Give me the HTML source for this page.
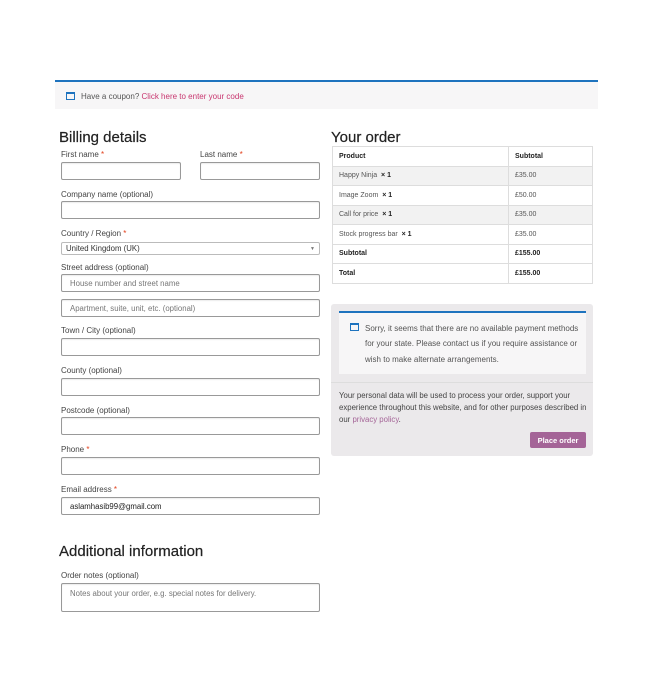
<!DOCTYPE html>
<html><head><meta charset="utf-8"><style>
*{margin:0;padding:0;box-sizing:border-box}
body{width:657px;height:696px;background:#fff;font-family:"Liberation Sans",sans-serif;color:#333;position:relative;overflow:hidden}
.a{position:absolute}
.l{position:absolute;font-size:8px;color:#444;white-space:nowrap}
.r{color:#e2401c}
.i{position:absolute;border:1px solid #999;border-radius:2px;background:#fff;box-shadow:inset 0 1px 1px rgba(0,0,0,.08);font-size:7.8px;color:#777;padding-left:8px;display:flex;align-items:center}
h2{position:absolute;font-weight:normal;font-size:15px;color:#222;white-space:nowrap;-webkit-text-stroke:0.2px #222}
table{position:absolute;left:332px;top:146px;width:261px;border-collapse:collapse;font-size:7px}
td{border:1px solid #ddd;height:19.5px;padding-left:6px;color:#555}
tr.g td{background:#f2f2f2}
td.b{font-weight:bold;color:#222}
.ic{position:absolute;width:9px;height:8px;border:1px solid #1e73be;border-top-width:2px}
</style></head><body>
<div class="a" style="left:55px;top:80px;width:543px;height:29px;background:#f7f6f7;border-top:2px solid #1e73be"></div>
<div class="ic" style="left:66px;top:92px"></div>
<div class="l" style="left:81px;top:92px;font-size:8px;color:#555">Have a coupon? <span style="color:#c8366f">Click here to enter your code</span></div>

<h2 style="left:59px;top:129px">Billing details</h2>
<div class="l" style="left:61px;top:150px">First name <span class="r">*</span></div>
<div class="i" style="left:61px;top:162px;width:120px;height:18px"></div>
<div class="l" style="left:200px;top:150px">Last name <span class="r">*</span></div>
<div class="i" style="left:200px;top:162px;width:120px;height:18px"></div>
<div class="l" style="left:61px;top:190px">Company name (optional)</div>
<div class="i" style="left:61px;top:201px;width:259px;height:18px"></div>
<div class="l" style="left:61px;top:229px">Country / Region <span class="r">*</span></div>
<div class="i" style="left:61px;top:242px;width:259px;height:13px;padding-left:4px;color:#333;box-shadow:none;border-color:#bbb">United Kingdom (UK)<span style="position:absolute;right:4px;font-size:5px;color:#777">▼</span></div>
<div class="l" style="left:61px;top:263px">Street address (optional)</div>
<div class="i" style="left:61px;top:274px;width:259px;height:18px">House number and street name</div>
<div class="i" style="left:61px;top:299px;width:259px;height:18px">Apartment, suite, unit, etc. (optional)</div>
<div class="l" style="left:61px;top:326px">Town / City (optional)</div>
<div class="i" style="left:61px;top:338px;width:259px;height:18px"></div>
<div class="l" style="left:61px;top:366px">County (optional)</div>
<div class="i" style="left:61px;top:378px;width:259px;height:18px"></div>
<div class="l" style="left:61px;top:406px">Postcode (optional)</div>
<div class="i" style="left:61px;top:417px;width:259px;height:18px"></div>
<div class="l" style="left:61px;top:445px">Phone <span class="r">*</span></div>
<div class="i" style="left:61px;top:457px;width:259px;height:18px"></div>
<div class="l" style="left:61px;top:485px">Email address <span class="r">*</span></div>
<div class="i" style="left:61px;top:497px;width:259px;height:18px;color:#222">aslamhasib99@gmail.com</div>
<h2 style="left:59px;top:543px">Additional information</h2>
<div class="l" style="left:61px;top:571px">Order notes (optional)</div>
<div class="i" style="left:61px;top:583px;width:259px;height:29px;align-items:flex-start;padding-top:5px">Notes about your order, e.g. special notes for delivery.</div>

<h2 style="left:331px;top:129px">Your order</h2>
<table>
<tr><td class="b" style="width:176px">Product</td><td class="b">Subtotal</td></tr>
<tr class="g"><td>Happy Ninja &nbsp;<b style="color:#222">× 1</b></td><td>£35.00</td></tr>
<tr><td>Image Zoom &nbsp;<b style="color:#222">× 1</b></td><td>£50.00</td></tr>
<tr class="g"><td>Call for price &nbsp;<b style="color:#222">× 1</b></td><td>£35.00</td></tr>
<tr><td>Stock progress bar &nbsp;<b style="color:#222">× 1</b></td><td>£35.00</td></tr>
<tr><td class="b">Subtotal</td><td class="b">£155.00</td></tr>
<tr><td class="b">Total</td><td class="b">£155.00</td></tr>
</table>

<div class="a" style="left:331px;top:304px;width:262px;height:152px;background:#ebe9eb;border-radius:3px"></div>
<div class="a" style="left:339px;top:311px;width:247px;height:63px;background:#f7f6f7;border-top:2px solid #1e73be"></div>
<div class="ic" style="left:350px;top:323px"></div>
<div class="a" style="left:365px;top:321px;width:218px;font-size:8px;line-height:15.3px;color:#555">Sorry, it seems that there are no available payment methods for your state. Please contact us if you require assistance or wish to make alternate arrangements.</div>
<div class="a" style="left:331px;top:382px;width:262px;height:1px;background:#ddd"></div>
<div class="a" style="left:339px;top:390px;width:250px;font-size:7.8px;line-height:11.8px;color:#444">Your personal data will be used to process your order, support your experience throughout this website, and for other purposes described in our <span style="color:#a46497">privacy policy</span>.</div>
<div class="a" style="left:530px;top:432px;width:56px;height:16px;background:#a46497;color:#fff;font-size:7.5px;font-weight:bold;display:flex;align-items:center;justify-content:center;border-radius:2px">Place order</div>
</body></html>
